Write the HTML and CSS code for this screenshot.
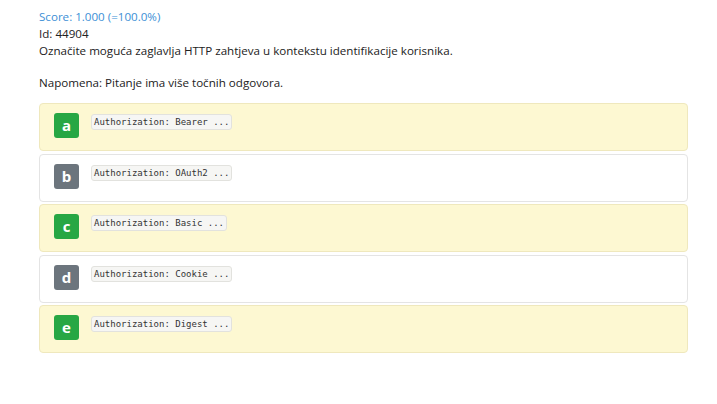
FILE: index.html
```html
<!DOCTYPE html>
<html>
<head>
<meta charset="utf-8">
<link rel="stylesheet" href="styles.css">
</head>
<body>
<div class="page">
  <div class="score">Score: 1.000 (=100.0%)</div>
  <div class="line">Id: 44904</div>
  <div class="line">Označite moguća zaglavlja HTTP zahtjeva u kontekstu identifikacije korisnika.</div>
  <div class="note">Napomena: Pitanje ima više točnih odgovora.</div>
  <div class="answers">
    <div class="answer correct"><span class="badge green">a</span><code>Authorization: Bearer ...</code></div>
    <div class="answer"><span class="badge grey">b</span><code>Authorization: OAuth2 ...</code></div>
    <div class="answer correct"><span class="badge green">c</span><code>Authorization: Basic ...</code></div>
    <div class="answer"><span class="badge grey">d</span><code>Authorization: Cookie ...</code></div>
    <div class="answer correct"><span class="badge green">e</span><code>Authorization: Digest ...</code></div>
  </div>
</div>
</body>
</html>
```
FILE: styles.css
```css
html, body {
  margin: 0;
  padding: 0;
  background: #fff;
}
.page {
  padding: 8px 29px 0 39px;
  font-family: "Open Sans", "Noto Sans", sans-serif;
  font-size: 11.6px;
  line-height: 17px;
  color: #222;
}
.score {
  color: #3d8fd6;
}
.note {
  margin-top: 15px;
}
.answers {
  margin-top: 12px;
  display: flex;
  flex-direction: column;
  gap: 2.5px;
}
.answer {
  border: 1px solid #e4e4e4;
  border-radius: 4px;
  background: #fff;
  display: flex;
  align-items: flex-start;
  padding: 9px 0 0 14px;
  box-sizing: border-box;
  height: 48px;
}
.answer.correct {
  background: #fdf8d2;
  border-color: #efe8bd;
}
.badge {
  width: 25px;
  height: 25px;
  border-radius: 3px;
  color: #fff;
  font-family: "Open Sans", sans-serif;
  font-weight: 700;
  font-size: 15px;
  line-height: 25px;
  text-align: center;
  margin-right: 12px;
  flex: none;
}
.green { background: #27a744; }
.grey { background: #6c757d; }
code {
  margin-top: 1px;
  font-family: "DejaVu Sans Mono", monospace;
  font-size: 9px;
  line-height: 14px;
  padding: 0 2px;
  background: #f6f6f4;
  border: 1px solid #e2e2de;
  border-radius: 3px;
  color: #333;
}
```
